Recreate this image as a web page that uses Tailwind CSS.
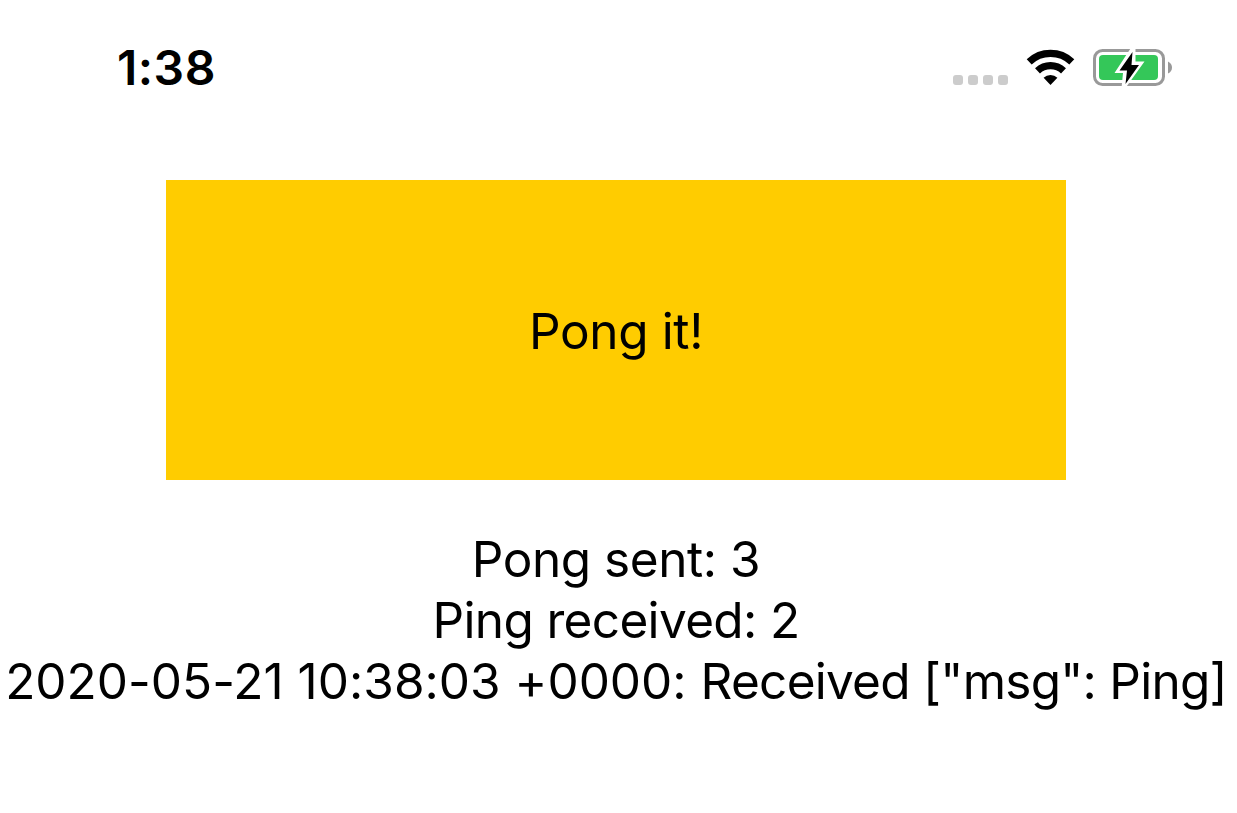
<!DOCTYPE html>
<html lang="en"><head><meta charset="utf-8"><title>Ping Pong</title>
<script src="https://cdn.jsdelivr.net/npm/@tailwindcss/browser@4"></script></head>
<body class="bg-white text-black font-['Inter',sans-serif]">
<div class="w-[1237px] h-[813px] overflow-hidden flex flex-col">
<header class="h-[180px] pt-[38px] pl-[117px] pr-[65px] flex justify-between items-start">
<div class="text-[48px] leading-[60px] font-semibold tracking-[0.5px]">1:38</div>
<svg class="mt-[2px] w-[220px] h-[60px] shrink-0" viewBox="952 40 220 60">
<g fill="#ccc"><rect x="953" y="75" width="10" height="10" rx="3"/><rect x="968" y="75" width="10" height="10" rx="3"/><rect x="983" y="75" width="10" height="10" rx="3"/><rect x="998" y="75" width="10" height="10" rx="3"/></g>
<g fill="none" stroke="#000" stroke-width="7.2"><path d="M1029.200 61.800a31 31 0 0 1 42.600 0"/><path d="M1037.500 70.800a19 19 0 0 1 26 0"/></g><path d="M1050.500 85l-6.900-7.200a10 10 0 0 1 13.800 0z"/>
<rect x="1094.500" y="50.500" width="69" height="34" rx="8" fill="none" stroke="#999" stroke-width="3"/><path d="M1168 61.500q4 2 4 6t-4 6z" fill="#999"/><rect x="1099" y="55" width="59" height="25" rx="4" fill="#34c759"/>
<path d="M1135.500 47L1131.500 47L1114.500 73H1123L1121.500 88H1125.500L1144.500 61.500H1135.500z" fill="#fff"/><path d="M1132.500 52L1119.500 70.500H1127L1125.500 84L1139 65H1131.500z"/>
</svg>
</header>
<main class="flex flex-col items-center pr-[5px]">
<button class="w-[900px] h-[300px] pt-[2px] bg-[#ffcc00] text-[49.5px] leading-[61px] tracking-[-0.37px]"><span>Pong it!</span></button>
<div class="mt-[49px] text-[49.5px] leading-[61px] text-center whitespace-nowrap"><p class="tracking-[-0.45px]"><span>Pong sent: 3</span></p><p class="tracking-[-0.65px]"><span>Ping received: 2</span></p><p><span class="tracking-[0.02px]">2020-05-21 10:38:03 +0000: </span><span class="tracking-[-0.74px]">Received ["msg": Ping]</span></p></div>
</main></div></body></html>
